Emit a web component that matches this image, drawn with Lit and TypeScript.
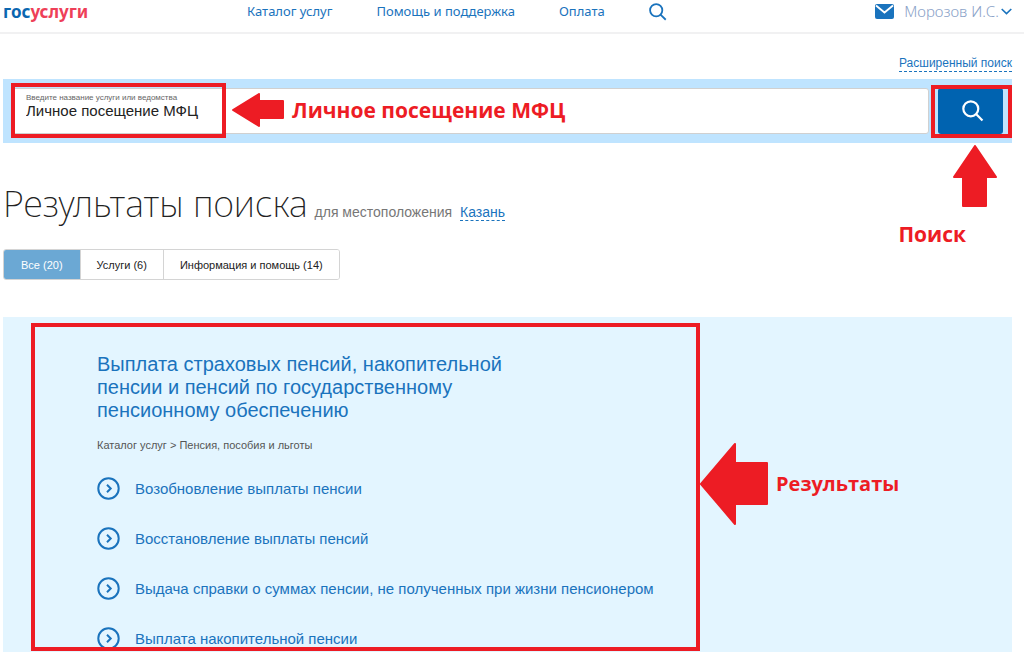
import { LitElement, html, css, svg } from "lit";
import { customElement, state } from "lit/decorators.js";

const magnifier = svg`<circle cx="8" cy="8" r="6.8"></circle><path d="M12.8 12.8 L18.6 18.6"></path>`;

@customElement("app-root")
export class AppRoot extends LitElement {
  static styles = css`
    :host {
      display: block;
      min-height: 100vh;
      background: #fff;
      color: #222;
      font-family: "Liberation Sans", Arial, sans-serif;
      --link: #1a73bd;
      --mark: #ed1c24;
    }
    * { box-sizing: border-box; }
    a { color: var(--link); text-decoration: none; }
    button { font-family: inherit; cursor: pointer; margin: 0; }
    svg { display: block; fill: none; }

    .header {
      display: grid;
      grid-template-columns: 244px 1fr auto;
      align-items: start;
      height: 34px;
      padding: 0 12px 0 3px;
      border-bottom: 2px solid #f1f1f2;
      font-family: "Noto Sans", sans-serif;
      font-size: 13px;
      line-height: 22px;
    }
    .logo { font-size: 17px; line-height: 24px; font-weight: 700; color: #0b66b0; }
    .logo span { color: #ee3f58; }
    .nav { display: flex; gap: 44px; }
    .icon-button { padding: 0; border: 0; background: none; margin-top: 2px; }
    .stroke { stroke: var(--link); stroke-width: 2; }
    .user { display: flex; align-items: center; line-height: 22px; }
    .user .name { margin: 0 2px 0 10px; font-size: 15px; font-weight: 300; color: #8aa2c8; }

    .page { padding: 0 12px 0 3px; }
    .advanced { display: flex; justify-content: flex-end; padding: 22px 0 7px; }
    .dashed {
      border-bottom: 1px dashed var(--link);
      font-size: 12px;
      line-height: 15px;
    }

    .search {
      position: relative;
      display: flex;
      gap: 9px;
      padding: 9px;
      background: #bfe4ff;
    }
    .field {
      flex: 1;
      height: 46px;
      padding: 5px 13px;
      background: #fff;
      border: 1px solid #d0d0d0;
      border-radius: 3px;
    }
    .field label { display: block; font-size: 8px; line-height: 8px; color: #666; }
    .field input {
      display: block;
      width: 100%;
      height: 18px;
      padding: 0;
      border: 0;
      outline: 0;
      background: none;
      font: 15px/18px "Liberation Sans", Arial, sans-serif;
      color: #222;
    }
    .submit {
      display: grid;
      place-items: center;
      width: 65px;
      height: 46px;
      padding: 0 0 0 4px;
      border: 0;
      border-radius: 3px;
      background: #0063b0;
    }
    .submit svg { stroke: #fff; stroke-width: 2; }

    .mark { position: absolute; pointer-events: none; }
    .frame { border: 4px solid var(--mark); }
    .mark svg { fill: var(--mark); stroke: var(--mark); stroke-width: 2; stroke-linejoin: round; }
    .caption {
      color: var(--mark);
      font: 700 21px/28px "Open Sans", sans-serif;
      white-space: nowrap;
    }
    .row { display: flex; align-items: center; gap: 8px; }
    .frame-query { left: 8px; top: 4px; width: 215px; height: 55px; }
    .note-query { left: 229px; top: 14px; }
    .frame-submit { right: 0; top: 6px; width: 81px; height: 53px; }
    .note-submit { right: 14px; top: 66px; }
    .note-submit .caption { position: absolute; right: 32px; top: 75px; }

    .title { display: flex; align-items: baseline; gap: 7px; padding-top: 36px; }
    h1 {
      margin: 0;
      font: 200 36px/50px "Noto Sans", sans-serif;
      color: #222;
    }
    .place { font-size: 14px; color: #777; }
    .place .dashed { margin-left: 4px; font-size: 14px; }

    .tabs {
      display: flex;
      width: fit-content;
      margin-top: 20px;
      border: 1px solid #d4d4d4;
      border-radius: 3px;
      overflow: hidden;
    }
    .tab {
      height: 29px;
      padding: 0 16px;
      border: 0;
      border-left: 1px solid #d4d4d4;
      background: #fff;
      font-size: 11px;
      color: #222;
    }
    .tab:first-child { border-left: 0; padding: 0 17px; }
    .tab.active { background: #6ba8d4; color: #fff; }

    .results { position: relative; margin-top: 37px; padding: 36px 94px 2px; background: #e3f5ff; }
    .frame-results { left: 28px; top: 6px; bottom: 1px; width: 669px; }
    .note-results { left: 697px; top: 126px; }
    .note-results .caption { font-size: 20px; }
    h2 { max-width: 440px; margin: 0; font-size: 20px; line-height: 23px; font-weight: 400; }
    .crumbs { margin: 16px 0 0; font-size: 11px; line-height: 14px; color: #555; }
    ul { display: grid; gap: 27px; margin: 25px 0 0; padding: 0; list-style: none; }
    li a { display: flex; align-items: center; gap: 15px; font-size: 15px; line-height: 23px; }
    li svg { stroke: var(--link); stroke-width: 2; }
  `;

  @state() private tab = 0;
  @state() private query = "Личное посещение МФЦ";

  private tabs = ["Все (20)", "Услуги (6)", "Информация и помощь (14)"];
  private items = [
    "Возобновление выплаты пенсии",
    "Восстановление выплаты пенсий",
    "Выдача справки о суммах пенсии, не полученных при жизни пенсионером",
    "Выплата накопительной пенсии",
  ];

  render() {
    return html`
      <header class="header">
        <a class="logo" href="#">гос<span>услуги</span></a>
        <nav class="nav">
          <a href="#">Каталог услуг</a>
          <a href="#">Помощь и поддержка</a>
          <a href="#">Оплата</a>
          <button class="icon-button" aria-label="Поиск по сайту">
            <svg class="stroke" width="18" height="18" viewBox="0 0 20 20">${magnifier}</svg>
          </button>
        </nav>
        <div class="user">
          <svg width="19" height="15" viewBox="0 0 19 15">
            <rect width="19" height="15" rx="2" fill="#1a73bd"></rect>
            <path d="M1 1.5 L9.5 8.5 L18 1.5" stroke="#fff" stroke-width="1.8"></path>
          </svg>
          <a class="name" href="#">Морозов И.С.</a>
          <svg class="stroke" width="11" height="7" viewBox="0 0 11 7"><path d="M0.7 1 L5.5 5.6 L10.3 1" stroke-width="1.6"></path></svg>
        </div>
      </header>
      <main class="page">
        <div class="advanced"><a class="dashed" href="#">Расширенный поиск</a></div>
        <form class="search" @submit=${(e: Event) => e.preventDefault()}>
          <div class="field">
            <label for="query">Введите название услуги или ведомства</label>
            <input id="query" type="text" .value=${this.query}
              @input=${(e: Event) => (this.query = (e.target as HTMLInputElement).value)} />
          </div>
          <button class="submit" aria-label="Найти">
            <svg width="22" height="22" viewBox="0 0 20 20">${magnifier}</svg>
          </button>
          <div class="mark frame frame-query"></div>
          <div class="mark note-query row">
            <svg width="52" height="34" viewBox="0 0 52 34"><path d="M1 17 L27 1 V8 H51 V25 H27 V33 Z"></path></svg>
            <span class="caption">Личное посещение МФЦ</span>
          </div>
          <div class="mark frame frame-submit"></div>
          <div class="mark note-submit">
            <svg width="46" height="62" viewBox="0 0 46 62"><path d="M23 1 L44 32 H34 V61 H11 V32 H2 Z"></path></svg>
            <span class="caption">Поиск</span>
          </div>
        </form>
        <div class="title">
          <h1>Результаты поиска</h1>
          <span class="place">для местоположения <a class="dashed" href="#">Казань</a></span>
        </div>
        <div class="tabs">
          ${this.tabs.map((t, i) => html`
            <button class="tab ${i === this.tab ? "active" : ""}" @click=${() => (this.tab = i)}>${t}</button>`)}
        </div>
        <section class="results">
          <h2><a href="#">Выплата страховых пенсий, накопительной пенсии и пенсий по государственному пенсионному обеспечению</a></h2>
          <p class="crumbs">Каталог услуг &gt; Пенсия, пособия и льготы</p>
          <ul>
            ${this.items.map((t) => html`
              <li><a href="#">
                <svg width="23" height="23" viewBox="0 0 23 23"><circle cx="11.5" cy="11.5" r="10.2"></circle><path d="M10 7.8 L13.7 11.5 L10 15.2"></path></svg>
                ${t}</a></li>`)}
          </ul>
          <div class="mark frame frame-results"></div>
          <div class="mark note-results row">
            <svg width="68" height="82" viewBox="0 0 68 82"><path d="M1 41 L35 1 V20 H67 V61 H35 V81 Z"></path></svg>
            <span class="caption">Результаты</span>
          </div>
        </section>
      </main>
    `;
  }
}
